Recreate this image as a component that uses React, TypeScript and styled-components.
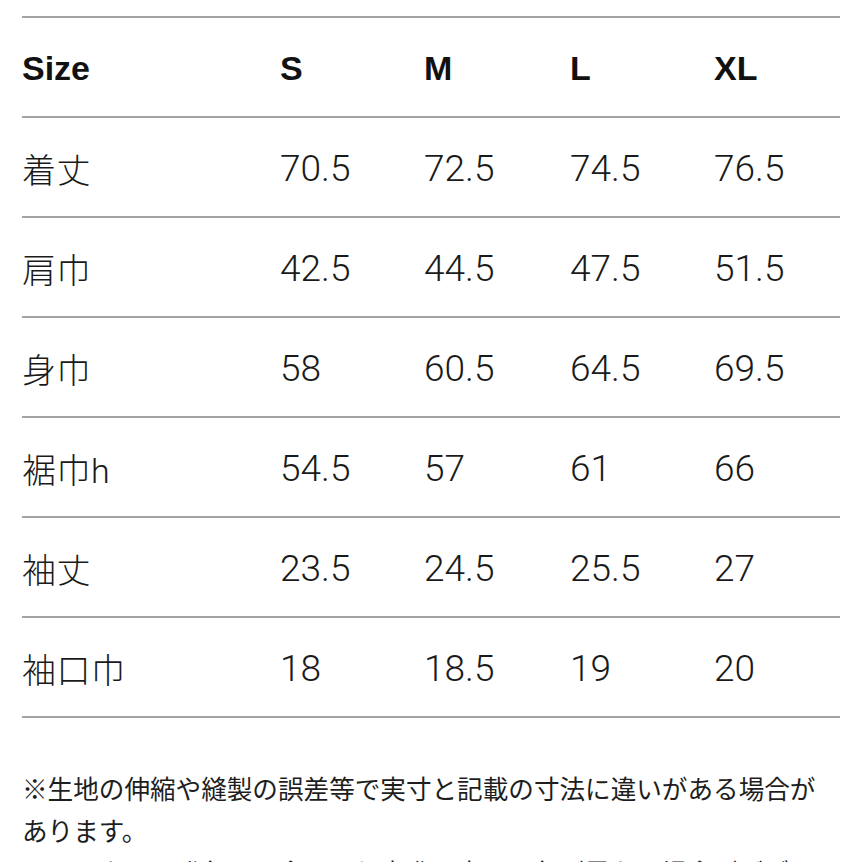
import styled, { createGlobalStyle } from "styled-components";

const GlobalStyle = createGlobalStyle`
  html, body {
    margin: 0;
    padding: 0;
    background: #ffffff;
  }
  body {
    font-family: "Roboto", "Noto Sans CJK JP", sans-serif;
    color: #1a1a1a;
  }
`;

const Page = styled.div`
  padding: 16px 22px 0 22px;
  width: 818px;
`;

const Table = styled.div`
  display: flex;
  flex-direction: column;
  border-bottom: 2px solid #a3a3a3;
`;

const Row = styled.div`
  display: grid;
  grid-template-columns: 258px 144px 146px 144px 1fr;
  align-items: center;
  height: 98px;
  border-top: 2px solid #a3a3a3;
`;

const HeadCell = styled.div`
  font-family: "Liberation Sans", Arial, sans-serif;
  font-weight: 700;
  font-size: 34px;
  color: #111111;
  padding-top: 2px;
`;

const Label = styled.div`
  font-family: "Roboto", "Noto Sans CJK JP", sans-serif;
  font-weight: 300;
  font-size: 34px;
  letter-spacing: 0.5px;
  color: #1a1a1a;
  padding-top: 2px;
`;

const Value = styled.div`
  font-family: "Roboto", sans-serif;
  font-weight: 300;
  font-size: 37px;
  color: #1a1a1a;
  padding-top: 2px;
`;

const Note = styled.p`
  margin: 49px 0 0 0;
  font-family: "Noto Sans CJK JP", sans-serif;
  font-weight: 400;
  font-size: 25.6px;
  line-height: 42px;
  color: #1e1e1e;
`;

const sizes = ["S", "M", "L", "XL"];

const rows: { label: string; values: string[] }[] = [
  { label: "着丈", values: ["70.5", "72.5", "74.5", "76.5"] },
  { label: "肩巾", values: ["42.5", "44.5", "47.5", "51.5"] },
  { label: "身巾", values: ["58", "60.5", "64.5", "69.5"] },
  { label: "裾巾h", values: ["54.5", "57", "61", "66"] },
  { label: "袖丈", values: ["23.5", "24.5", "25.5", "27"] },
  { label: "袖口巾", values: ["18", "18.5", "19", "20"] },
];

export default function App() {
  return (
    <>
      <GlobalStyle />
      <Page>
        <Table>
          <Row>
            <HeadCell>Size</HeadCell>
            {sizes.map((s) => (
              <HeadCell key={s}>{s}</HeadCell>
            ))}
          </Row>
          {rows.map((r) => (
            <Row key={r.label}>
              <Label>{r.label}</Label>
              {r.values.map((v, i) => (
                <Value key={i}>{v}</Value>
              ))}
            </Row>
          ))}
        </Table>
        <Note>
          ※生地の伸縮や縫製の誤差等で実寸と記載の寸法に違いがある場合があります。
          <br />
          ※モニターの発色の具合により実際の商品と色が異なる場合がございます。
        </Note>
      </Page>
    </>
  );
}
